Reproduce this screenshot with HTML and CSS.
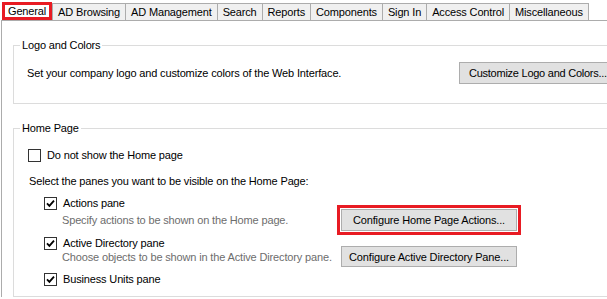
FILE: index.html
```html
<!DOCTYPE html>
<html lang="en">

<head>
    <meta charset="UTF-8">
    <meta name="viewport" content="width=device-width, initial-scale=1.0">
    <title>Web Interface Settings - General</title>
    <link rel="stylesheet" href="styles.css">
</head>

<body>
    <div class="settings">
        <ul class="tabs">
            <li class="tab active">General</li>
            <li class="tab">AD Browsing</li>
            <li class="tab">AD Management</li>
            <li class="tab">Search</li>
            <li class="tab">Reports</li>
            <li class="tab">Components</li>
            <li class="tab">Sign In</li>
            <li class="tab">Access Control</li>
            <li class="tab last">Miscellaneous</li>
        </ul>
        <div class="tab-panel">
            <!-- Logo and Colors -->
            <fieldset class="group group-logo">
                <legend>Logo and Colors</legend>
                <div class="logo-row">
                    <span>Set your company logo and customize colors of the Web Interface.</span>
                    <button class="btn btn-logo">Customize Logo and Colors...</button>
                </div>
            </fieldset>

            <!-- Home Page -->
            <fieldset class="group group-home">
                <legend>Home Page</legend>
                <label class="check check-hide"><span class="box"></span>Do not show the Home page</label>
                <p class="hint">Select the panes you want to be visible on the Home Page:</p>
                <div class="panes">
                    <label class="check check-actions">
                        <span class="box"><svg viewBox="0 0 11 11"><path d="M2 5.4 L4.4 7.9 L9 2.6" /></svg></span>Actions pane
                    </label>
                    <div class="pane-row pane-row-actions">
                        <span class="note">Specify actions to be shown on the Home page.</span>
                        <button class="btn btn-pane btn-marked">Configure Home Page Actions...</button>
                    </div>
                    <label class="check check-ad">
                        <span class="box"><svg viewBox="0 0 11 11"><path d="M2 5.4 L4.4 7.9 L9 2.6" /></svg></span>Active Directory pane
                    </label>
                    <div class="pane-row pane-row-ad">
                        <span class="note">Choose objects to be shown in the Active Directory pane.</span>
                        <button class="btn btn-pane">Configure Active Directory Pane...</button>
                    </div>
                    <label class="check check-bu">
                        <span class="box"><svg viewBox="0 0 11 11"><path d="M2 5.4 L4.4 7.9 L9 2.6" /></svg></span>Business Units pane
                    </label>
                </div>
            </fieldset>
        </div>
    </div>
</body>

</html>
```

FILE: styles.css
```css
/* General Styles */
body {
    font-family: "Liberation Sans", Arial, sans-serif;
    font-size: 11px;
    letter-spacing: -0.15px;
    margin: 0;
    padding: 0;
    background: #fff;
    color: #000;
    overflow: hidden;
}

.settings {
    width: 606px;
    margin-left: 1px;
}

/* Tabs */
.tabs {
    display: flex;
    align-items: flex-end;
    height: 20px;
    margin: 0;
    padding: 0 0 0 1px;
    list-style: none;
}

.tab {
    height: 16px;
    line-height: 16px;
    padding: 0 5px;
    background: #f0f0f0;
    border: 1px solid #acacac;
    border-bottom: none;
    border-right: none;
    white-space: nowrap;
}

.tab.last {
    border-right: 1px solid #acacac;
}

.tab.active {
    height: 12px;
    line-height: 12px;
    padding: 0 3px;
    background: #fff;
    border: 3px solid #e81b23;
}

.tab-panel {
    border-top: 1px solid #acacac;
    border-left: 1px solid #acacac;
}

/* Group boxes (they run on past the right edge of the window) */
.group {
    margin: 17px 0 0 11px;
    padding: 0;
    border: 1px solid #dcdcdc;
    border-right: none;
    min-width: 0;
}

.group legend {
    margin-left: 6px;
    padding: 0 2px;
    line-height: 14px;
}

.group-logo {
    padding: 10px 0 19px;
}

.group-home {
    padding: 14px 0 10px;
}

.logo-row {
    display: grid;
    grid-template-columns: 432px auto;
    align-items: center;
    margin-left: 13px;
}

/* Buttons */
.btn {
    font: inherit;
    letter-spacing: inherit;
    color: #000;
    height: 22px;
    padding: 0;
    background: #e1e1e1;
    border: 1px solid #adadad;
    border-radius: 0;
    white-space: nowrap;
}

.btn-logo {
    width: 148px;
    padding-left: 9px;
    text-align: left;
    letter-spacing: -0.25px;
    border-right: none;
}

.btn-pane {
    width: 176px;
}

.btn-marked {
    outline: 3px solid #e81b23;
    outline-offset: 1px;
}

/* Checkboxes */
.check {
    display: flex;
    align-items: center;
    gap: 6px;
    height: 13px;
    line-height: 13px;
    white-space: nowrap;
}

.box {
    box-sizing: border-box;
    width: 13px;
    height: 13px;
    border: 1px solid #333;
    background: #fff;
}

.box svg {
    display: block;
    width: 11px;
    height: 11px;
}

.box path {
    fill: none;
    stroke: #000;
    stroke-width: 1.8;
}

.check-hide {
    margin-left: 14px;
}

.hint {
    margin: 12px 0 0 15px;
    line-height: 15px;
}

.panes {
    margin-left: 30px;
}

.check-actions {
    margin-top: 8px;
}

.check-ad,
.check-bu {
    margin-top: 6px;
}

.pane-row {
    display: grid;
    grid-template-columns: 279px 176px;
    align-items: center;
    margin-left: 18px;
}

.pane-row-actions {
    margin-top: -1px;
}

.pane-row-ad {
    margin-top: -4px;
    height: 21px;
}

.pane-row-ad .btn {
    height: 21px;
}

.note {
    color: #6d6d6d;
}
```
